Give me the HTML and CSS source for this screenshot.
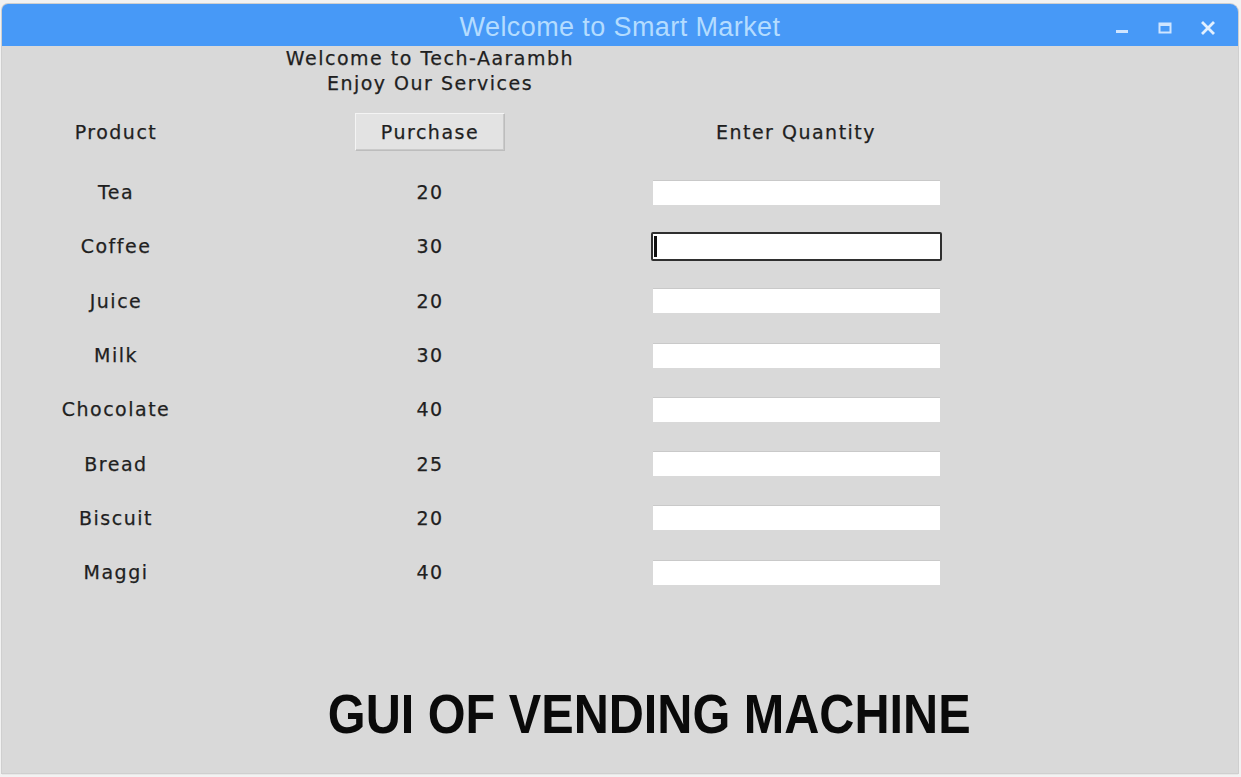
FILE: index.html
```html
<!DOCTYPE html>
<html>
<head>
<meta charset="utf-8">
<title>Welcome to Smart Market</title>
<link rel="stylesheet" href="styles.css">
</head>
<body>
<div class="window">
  <div class="titlebar">
    <div class="title">Welcome to Smart Market</div>
    <div class="controls">
      <svg class="ctl" width="16" height="16" viewBox="0 0 16 16"><rect x="2" y="10" width="12" height="3" fill="#cfe5ff"/></svg>
      <svg class="ctl" width="16" height="16" viewBox="0 0 16 16"><rect x="2.5" y="3.5" width="11" height="9" fill="none" stroke="#cfe5ff" stroke-width="2"/><rect x="2.5" y="3" width="11" height="3" fill="#cfe5ff"/></svg>
      <svg class="ctl" width="16" height="16" viewBox="0 0 16 16"><path d="M3 3 L13 13 M13 3 L3 13" stroke="#e2f0ff" stroke-width="2.8" stroke-linecap="square"/></svg>
    </div>
  </div>
  <div class="content">
    <div class="welcome">
      <div class="spacer"></div>
      <div class="welcome-text">
        <div>Welcome to Tech-Aarambh</div>
        <div>Enjoy Our Services</div>
      </div>
    </div>
    <div class="grid">
      <div class="cell head">Product</div>
      <div class="cell head"><button class="btn">Purchase</button></div>
      <div class="cell head">Enter Quantity</div>

      <div class="cell">Tea</div><div class="cell">20</div><div class="cell"><div class="entry"></div></div>
      <div class="cell">Coffee</div><div class="cell">30</div><div class="cell"><div class="entry focus"><span class="caret"></span></div></div>
      <div class="cell">Juice</div><div class="cell">20</div><div class="cell"><div class="entry"></div></div>
      <div class="cell">Milk</div><div class="cell">30</div><div class="cell"><div class="entry"></div></div>
      <div class="cell">Chocolate</div><div class="cell">40</div><div class="cell"><div class="entry"></div></div>
      <div class="cell">Bread</div><div class="cell">25</div><div class="cell"><div class="entry"></div></div>
      <div class="cell">Biscuit</div><div class="cell">20</div><div class="cell"><div class="entry"></div></div>
      <div class="cell">Maggi</div><div class="cell">40</div><div class="cell"><div class="entry"></div></div>
    </div>
    <div class="footer">
      <span class="big">GUI OF VENDING MACHINE</span>
    </div>
  </div>
</div>
</body>
</html>
```

FILE: styles.css
```css
html, body {
  margin: 0;
  padding: 0;
  background: #f2f2f2;
}
body {
  width: 1241px;
  height: 777px;
  overflow: hidden;
}
.window {
  margin: 4px 3px 0 2px;
  height: 769px;
  background: #d9d9d9;
  border-radius: 6px 8px 0 0;
  box-shadow: 0 0 0 1px #cfcfcf, 0 2px 0 0 #e8e8e8;
  display: flex;
  flex-direction: column;
  overflow: hidden;
}
.titlebar {
  height: 42px;
  background: #4799f7;
  position: relative;
  display: flex;
  align-items: center;
  justify-content: center;
  flex: none;
}
.title {
  font-family: "Liberation Sans", Arial, sans-serif;
  font-size: 27px;
  letter-spacing: 0.4px;
  color: #b4dcff;
  padding-top: 5px;
}
.controls {
  position: absolute;
  right: 22px;
  top: 16px;
  display: flex;
  gap: 27px;
}
.ctl {
  display: block;
}
.content {
  flex: 1;
  display: flex;
  flex-direction: column;
  font-family: "DejaVu Sans", sans-serif;
  font-size: 19px;
  letter-spacing: 1.5px;
  color: #1f1f1f;
  -webkit-text-stroke: 0.25px #1f1f1f;
}
.welcome {
  display: flex;
  height: 50px;
}
.spacer {
  width: 228px;
}
.welcome-text {
  width: 400px;
  text-align: center;
  line-height: 25px;
}
.grid {
  margin-top: 17px;
  display: grid;
  grid-template-columns: 228px 400px 332px;
  grid-template-rows: 52px;
  grid-auto-rows: 54.3px;
}
.cell {
  display: flex;
  align-items: center;
  justify-content: center;
  text-align: center;
}
.cell.head {
  height: 38px;
}
.btn {
  width: 150px;
  height: 38px;
  font-family: "DejaVu Sans", sans-serif;
  font-size: 19px;
  letter-spacing: 1.5px;
  color: #1f1f1f;
  -webkit-text-stroke: 0.25px #1f1f1f;
  background: #e3e3e3;
  border: 1px solid #bdbdbd;
  border-top-color: #f4f4f4;
  border-left-color: #f4f4f4;
  box-shadow: inset -1px -1px 0 #cacaca;
  padding: 0;
  margin: 0;
}
.entry {
  width: 287px;
  height: 25px;
  background: #ffffff;
  border-top: 1px solid #c9c9c9;
  box-sizing: border-box;
  position: relative;
}
.entry.focus {
  width: 291px;
  height: 29px;
  border: 2px solid #2f2f2f;
  border-radius: 2px;
}
.caret {
  position: absolute;
  left: 1px;
  top: 2px;
  width: 3px;
  height: 21px;
  background: #111;
}
.footer {
  margin-top: 82px;
  display: flex;
  justify-content: center;
  padding-left: 58px;
}
.big {
  display: inline-block;
  font-family: "Liberation Sans", Arial, sans-serif;
  font-weight: bold;
  font-size: 56px;
  letter-spacing: 0;
  color: #0a0a0a;
  -webkit-text-stroke: 0;
  transform: scaleX(0.868);
}
```
